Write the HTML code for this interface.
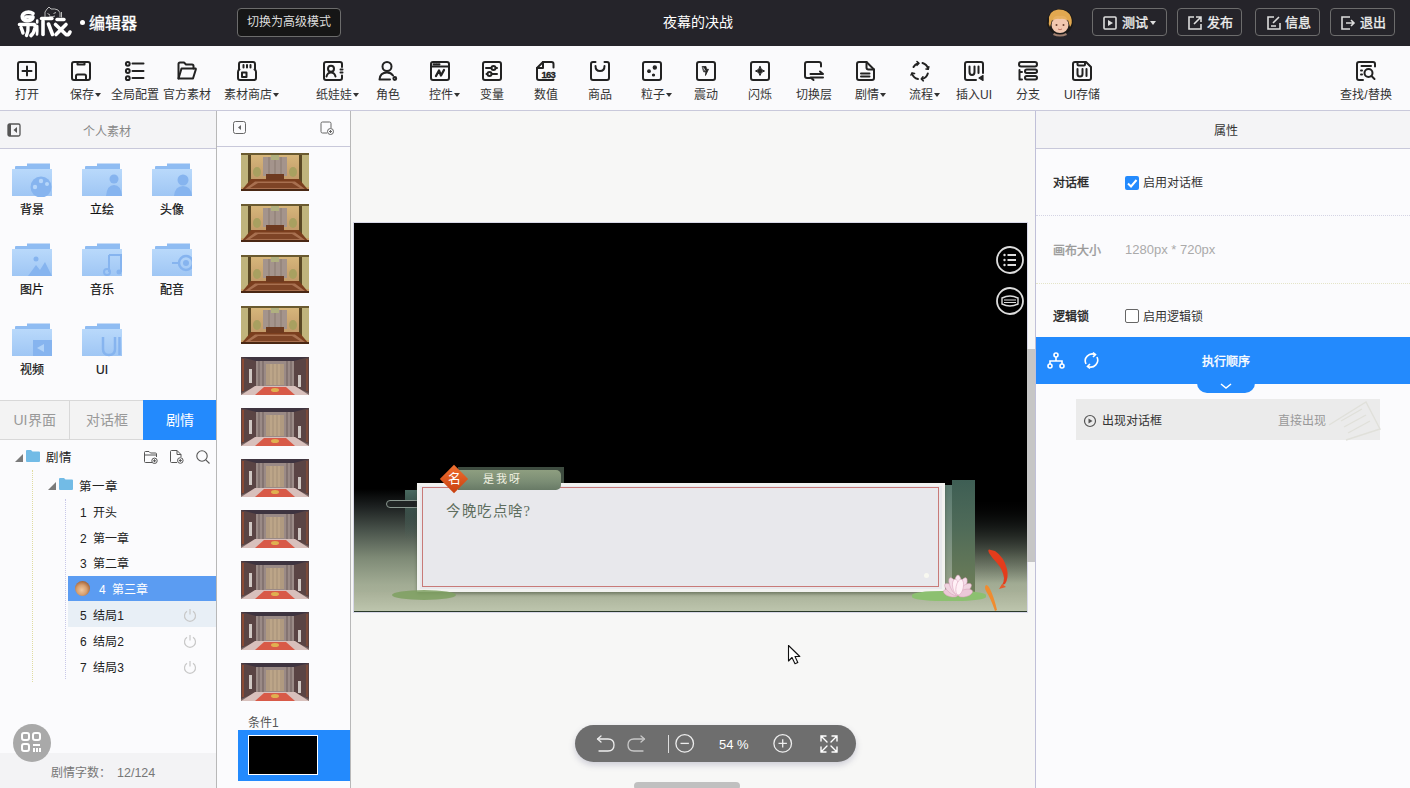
<!DOCTYPE html>
<html lang="zh-CN"><head><meta charset="utf-8">
<style>
*{box-sizing:border-box;margin:0;padding:0}
html,body{width:1410px;height:788px;overflow:hidden;background:#fbfbfd;font-family:"Liberation Sans",sans-serif;color:#333}
.a{position:absolute}
svg{position:absolute;overflow:visible}
#hdr{left:0;top:0;width:1410px;height:46px;background:#25242a}
.hb{position:absolute;top:8px;height:28px;border:1px solid #6c6c6c;border-radius:4px;color:#eee;font-size:13px;line-height:26px}
#tb{left:0;top:46px;width:1410px;height:65px;background:#fafafc;border-bottom:1px solid #c9c9db}
.tl{position:absolute;top:87px;font-size:12px;line-height:16px;color:#333;white-space:nowrap;text-align:center;width:80px}
.tri{display:inline-block;width:0;height:0;border-left:3px solid transparent;border-right:3px solid transparent;border-top:4px solid #333;vertical-align:middle;margin-left:1px;position:relative;top:-1px}
.ic{stroke:#222;stroke-width:2;fill:none;stroke-linecap:round;stroke-linejoin:round}
.fl{position:absolute;font-size:12px;line-height:14px;color:#111;text-align:center;width:70px;-webkit-text-stroke:0.2px #111}
.tree{position:absolute;font-size:12px;line-height:16px;color:#333;white-space:nowrap}
.th{position:absolute;left:241px;width:68px;height:38px}
.gold{background:
 linear-gradient(180deg,rgba(0,0,0,0) 0,rgba(0,0,0,0) 62%,#6b3a1c 66%,#8a4a24 80%,#5a2c14 100%),
 linear-gradient(90deg,#4a4020 0,#8a7a40 8%,#d8c080 22%,#e2cfa0 40%,#b8a890 50%,#e2cfa0 60%,#d8c080 78%,#8a7a40 92%,#4a4020 100%)}
.red{background:
 linear-gradient(180deg,rgba(0,0,0,0) 0,rgba(0,0,0,0) 60%,#a05040 66%,#d06050 80%,#c89080 100%),
 linear-gradient(90deg,#3a2420 0,#7a5a50 12%,#9a8070 30%,#b09a80 50%,#9a8070 70%,#7a5a50 88%,#3a2420 100%)}
</style></head><body>

<!-- HEADER -->
<div id="hdr" class="a"></div>
<svg style="left:0;top:0" width="76" height="46"><g fill="none" stroke="#fff" stroke-linecap="round" stroke-linejoin="round">
<path d="M33 13.5 Q30 11.5 26 12.5 Q21.5 14 22.5 18 Q24 21.5 29 20.5 Q33 19.5 33 17 H26" stroke-width="3.6"/>
<path d="M19.5 24.5 H34 Q35.5 25 35 28 Q34 33 31 35.5" stroke-width="3.6"/>
<path d="M21 27.5 Q22.5 31 23 33" stroke-width="3.4"/>
<path d="M28 26.5 Q28.5 31 26.5 35.5" stroke-width="3.4"/>
<path d="M37.2 20.5 V22.5 M37.2 26 Q37.5 31 37 34.5" stroke-width="2.6"/>
<path d="M41.5 18.5 H52" stroke-width="3.4"/>
<path d="M43 21 V34.5" stroke-width="3.6"/>
<path d="M48.5 24 L52.5 34.5" stroke-width="3.6"/>
<path d="M57 19.5 H64" stroke-width="3.4"/>
<path d="M55.5 24.5 L66 34.5 Q68.5 35.5 70 32" stroke-width="3.6"/>
<path d="M66 24.5 L56 34.5" stroke-width="3.6"/>
</g><g fill="none" stroke="#bbb" stroke-width="1"><path d="M45 17 Q44 11 47 9 L49 7 L51 9 Q55 8.5 58 10 Q61 12 60 17"/><path d="M47.5 13.5 L50 15 M53.5 13.5 L56 12.5 M49 16 Q52 17.5 55 16"/><path d="M61.5 12 V17.5"/></g></svg>
<div class="a" style="left:80px;top:20px;width:5px;height:5px;border-radius:50%;background:#fff"></div>
<div class="a" style="left:89px;top:14px;color:#fff;font-size:16px;line-height:20px;-webkit-text-stroke:0.35px currentColor">编辑器</div>
<div class="hb" style="left:237px;width:104px;top:8px;height:29px;text-align:center;font-size:12px;line-height:27px;color:#ddd;background:#161616">切换为高级模式</div>
<div class="a" style="left:598px;width:200px;top:13px;text-align:center;color:#fff;font-size:14px;line-height:18px">夜幕的决战</div>
<svg style="left:1046px;top:7px" width="28" height="30"><circle cx="14" cy="15" r="13" fill="#1c1a18"/><path d="M3 14 Q2 4 12 2.5 Q22 2 25 10 Q27 16 24 20 L22 13 Q14 10 6 13 L4 20 Q2 17 3 14Z" fill="#e2a850"/><ellipse cx="14" cy="18" rx="8.5" ry="8" fill="#f2c8b0"/><path d="M5.5 14 Q8 8 14 9 Q20 8 22.5 14 Q18 11 14 12 Q10 11 5.5 14Z" fill="#e8b060"/><circle cx="10.5" cy="18" r="1" fill="#6a4030"/><circle cx="17.5" cy="18" r="1" fill="#6a4030"/><path d="M12 22 Q14 23.5 16 22" stroke="#b06050" stroke-width=".8" fill="none"/><path d="M8 26 Q14 29 20 26 L21 28 Q14 31 7 28Z" fill="#a08070"/></svg>
<div class="hb" style="left:1092px;width:75px"><svg style="left:10px;top:7px" width="14" height="14"><rect x="1" y="1" width="12" height="12" rx="1" fill="none" stroke="#ddd" stroke-width="1.6"/><path d="M5 4 L10 7 L5 10 Z" fill="#ddd"/></svg><span class="a" style="left:29px;top:1px;-webkit-text-stroke:0.35px currentColor">测试</span><span class="a" style="left:57px;top:12px;border-left:3px solid transparent;border-right:3px solid transparent;border-top:4px solid #ddd"></span></div>
<div class="hb" style="left:1177px;width:65px"><svg style="left:10px;top:7px" width="14" height="14"><path d="M6 1 H1 V13 H13 V8 M8 1 H13 V6 M13 1 L6 8" fill="none" stroke="#ddd" stroke-width="1.6"/></svg><span class="a" style="left:29px;top:1px;-webkit-text-stroke:0.35px currentColor">发布</span></div>
<div class="hb" style="left:1255px;width:65px"><svg style="left:11px;top:7px" width="14" height="14"><path d="M7 1 H1 V13 H13 V7 M12 1 L6 7 M4 10 H9" fill="none" stroke="#ddd" stroke-width="1.6"/></svg><span class="a" style="left:29px;top:1px;-webkit-text-stroke:0.35px currentColor">信息</span></div>
<div class="hb" style="left:1330px;width:65px"><svg style="left:10px;top:7px" width="14" height="14"><path d="M9 1 H1 V13 H9 M5 7 H13 M10 4 L13 7 L10 10" fill="none" stroke="#ddd" stroke-width="1.6"/></svg><span class="a" style="left:29px;top:1px;-webkit-text-stroke:0.35px currentColor">退出</span></div>

<!-- TOOLBAR -->
<div id="tb" class="a"></div>
<div id="tools"><svg style="left:17px;top:61px" width="20" height="20"><g class="ic"><rect x="1" y="1" width="18" height="18" rx="2"/><path d="M10 5.5V14.5M5.5 10H14.5"/></g></svg>
<div class="tl" style="left:-13px">打开</div>
<svg style="left:71px;top:61px" width="20" height="20"><g class="ic"><rect x="1" y="1" width="18" height="18" rx="2"/><path d="M6.5 1V3.5H13.5V1M5 19V15Q5 13.5 6.5 13.5H13.5Q15 13.5 15 15V19"/></g></svg>
<div class="tl" style="left:45px">保存<span class="tri"></span></div>
<svg style="left:125px;top:61px" width="20" height="20"><g class="ic"><circle cx="2.8" cy="2.8" r="1.9"/><circle cx="2.8" cy="10" r="1.9"/><circle cx="2.8" cy="17.2" r="1.9"/><path d="M7.5 2.5H18.5M7.5 10H18.5M7.5 17H18.5"/></g></svg>
<div class="tl" style="left:95px">全局配置</div>
<svg style="left:177px;top:61px" width="20" height="20"><g class="ic"><path d="M1.5 17.5V3Q1.5 1.5 3 1.5H7L9 3.5H15Q16.5 3.5 16.5 5V7.5"/><path d="M1.5 17.5L4.5 7.5H18.5Q19 7.5 18.8 8.5L16 17.5Z"/></g></svg>
<div class="tl" style="left:147px">官方素材</div>
<svg style="left:237px;top:61px" width="20" height="20"><g class="ic"><path d="M2 8V3Q2 1 4 1H16Q18 1 18 3V8"/><path d="M6.5 4V6.5M10 4V6.5M13.5 4V6.5"/><path d="M2.5 8.5Q1 9 1 11V17Q1 19 3 19H17Q19 19 19 17V11Q19 9 17.5 8.5"/><rect x="5" y="11.5" width="4.5" height="4.5"/></g></svg>
<div class="tl" style="left:211px">素材商店<span class="tri"></span></div>
<svg style="left:323px;top:61px" width="20" height="20"><g class="ic"><path d="M19 6V3Q19 1 17 1H3Q1 1 1 3V17Q1 19 3 19H17Q19 19 19 17V14.5"/><path d="M17.5 8.5H19.5M17.5 11.5H19.5"/><circle cx="8" cy="7.8" r="3"/><path d="M3.5 15.5Q4.5 11.5 8 11.5Q11.5 11.5 12.5 15.5"/></g></svg>
<div class="tl" style="left:297px">纸娃娃<span class="tri"></span></div>
<svg style="left:378px;top:61px" width="20" height="20"><g class="ic"><circle cx="9" cy="5.5" r="4.5"/><path d="M1.5 18.5Q2 11.5 9 11.5Q13 11.5 15 14.5M1.5 18.5H12"/><circle cx="16.8" cy="17.5" r="1.4"/></g></svg>
<div class="tl" style="left:348px">角色</div>
<svg style="left:430px;top:61px" width="20" height="20"><g class="ic"><rect x="1" y="1" width="18" height="18" rx="2"/><path d="M1 5.5H19M3.5 3.2H4.5M6 3.2H7M8.5 3.2H9.5"/><path d="M6 15L9 9.5L11 14.5L14 9" stroke-width="2.3"/></g></svg>
<div class="tl" style="left:404px">控件<span class="tri"></span></div>
<svg style="left:482px;top:61px" width="20" height="20"><g class="ic"><rect x="1" y="1" width="18" height="18" rx="2"/><path d="M4 7H15M4.5 13H15"/><circle cx="11.5" cy="7" r="2" fill="#fafafc"/><circle cx="7.5" cy="13" r="2" fill="#fafafc"/></g></svg>
<div class="tl" style="left:452px">变量</div>
<svg style="left:536px;top:61px" width="20" height="20"><g class="ic"><path d="M17.5 6.5V3Q17.5 1 15.5 1H7L1 7V17Q1 19 3 19H17Q17.5 19 17.5 18.5"/><path d="M1 7H7V1"/><text x="5.5" y="16.8" font-size="9.5" font-weight="bold" font-family="Liberation Sans" fill="#222" stroke="#222" stroke-width="0.3" letter-spacing="-0.8">163</text></g></svg>
<div class="tl" style="left:506px">数值</div>
<svg style="left:590px;top:61px" width="20" height="20"><g class="ic"><path d="M5.5 1H3Q1 1 1 3V17Q1 19 3 19H17Q19 19 19 17V3Q19 1 17 1H14.5"/><path d="M5.5 5Q5.5 10 10 10Q14.5 10 14.5 5"/></g></svg>
<div class="tl" style="left:560px">商品</div>
<svg style="left:642px;top:61px" width="20" height="20"><g class="ic"><rect x="1" y="1" width="18" height="18" rx="2"/><circle cx="7" cy="10.2" r="1.3" fill="#222" stroke-width="1.2"/><circle cx="12.8" cy="6.5" r="1.6" fill="#222" stroke-width="1.2"/><circle cx="11.5" cy="14" r="1" fill="#222" stroke-width="1.2"/></g></svg>
<div class="tl" style="left:616px">粒子<span class="tri"></span></div>
<svg style="left:696px;top:61px" width="20" height="20"><g class="ic"><rect x="1" y="1" width="18" height="18" rx="2"/><path d="M6.5 5.5H10L10.5 8.3L12.5 8.3L9.5 14.5L9.8 10.8L8 10.8Z" fill="#222" stroke-width="0.8"/><path d="M7.5 6.8 L9 9.5" stroke="#fafafc" stroke-width="0.8"/></g></svg>
<div class="tl" style="left:666px">震动</div>
<svg style="left:750px;top:61px" width="20" height="20"><g class="ic"><rect x="1" y="1" width="18" height="18" rx="2"/><path d="M10 5.5Q10.6 9.2 14.5 10Q10.6 10.8 10 14.5Q9.4 10.8 5.5 10Q9.4 9.2 10 5.5Z" fill="#222" stroke-width="1"/></g></svg>
<div class="tl" style="left:720px">闪烁</div>
<svg style="left:804px;top:61px" width="20" height="20"><g class="ic"><path d="M6 17H3Q1 17 1 15V3Q1 1 3 1H15Q17 1 17 3V5.5"/><path d="M6.5 13H19L16 10.5M19 16.5H6.5L9.5 19"/></g></svg>
<div class="tl" style="left:774px">切换层</div>
<svg style="left:856px;top:61px" width="20" height="20"><g class="ic"><path d="M1 3Q1 1 3 1H10.5L18 8.5V17Q18 19 16 19H3Q1 19 1 17Z"/><path d="M10.5 1V6.5Q10.5 8.5 12.5 8.5H18"/><path d="M5 12.5H13.5M5 15.5H13.5"/></g></svg>
<div class="tl" style="left:830px">剧情<span class="tri"></span></div>
<svg style="left:910px;top:61px" width="20" height="20"><g class="ic"><path d="M3.5 6 A8 8 0 0 1 8 2.2" /><path d="M12.5 2 A8 8 0 0 1 18 7.5"/><path d="M17.8 12.5 A8 8 0 0 1 12 18"/><path d="M8 18 A8 8 0 0 1 2 12.5"/><path d="M7 0.5 L9 2.3 L7 4.3" stroke-width="1.6"/><path d="M16 8 L18.2 8.2 L18.8 5.8" stroke-width="1.6"/><path d="M13 15.8 L11.3 18 L13.3 19.8" stroke-width="1.6"/><path d="M1 14 L2 12 L4.5 12.5" stroke-width="1.6"/></g></svg>
<div class="tl" style="left:884px">流程<span class="tri"></span></div>
<svg style="left:964px;top:61px" width="20" height="20"><g class="ic"><path d="M12 19H3Q1 19 1 17V3Q1 1 3 1H17Q19 1 19 3V12"/><path d="M5.5 5.5V11Q5.5 14 8 14Q10.5 14 10.5 11V5.5M14.5 5.5V12"/><path d="M19 14.5V19.5L15 17Z" fill="#222" stroke-width="1.2"/></g></svg>
<div class="tl" style="left:934px">插入UI</div>
<svg style="left:1018px;top:61px" width="20" height="20"><g class="ic"><rect x="1" y="1" width="18" height="4.5" rx="2.2"/><rect x="7" y="8.5" width="12" height="3.5" rx="1.7"/><rect x="7" y="15" width="12" height="3.5" rx="1.7"/><path d="M1.5 9V18.5H4M1.5 11H4"/></g></svg>
<div class="tl" style="left:988px">分支</div>
<svg style="left:1072px;top:61px" width="20" height="20"><g class="ic"><path d="M1 3Q1 1 3 1H14L19 6V17Q19 19 17 19H3Q1 19 1 17Z"/><path d="M5.5 1V3.5Q5.5 4.5 6.5 4.5H12Q13 4.5 13 3.5V1"/><path d="M5.5 8V13Q5.5 15.5 8 15.5Q10.5 15.5 10.5 13V8M14.5 8V15"/></g></svg>
<div class="tl" style="left:1042px">UI存储</div>
<svg style="left:1356px;top:61px" width="20" height="20"><g class="ic"><path d="M7 19H3Q1 19 1 17V3Q1 1 3 1H17Q19 1 19 3V5.5"/><path d="M5.5 5H15M5 9.5H6M5 13.5H6"/><circle cx="12.5" cy="12" r="4"/><path d="M15.5 15L18.5 18"/></g></svg>
<div class="tl" style="left:1326px">查找/替换</div></div><!--/tools-->

<!-- LEFT PANEL -->
<div class="a" style="left:0;top:111px;width:216px;height:38px;background:#f4f4f6;border-bottom:1px solid #c8c8da"></div>
<svg style="left:7px;top:123px" width="14" height="14"><rect x="1" y="1" width="12" height="12" rx="1.5" fill="none" stroke="#555" stroke-width="1.3"/><rect x="1" y="1" width="3" height="12" fill="#555"/><path d="M10 4 L6.5 7 L10 10Z" fill="#555"/></svg>
<div class="a" style="left:-1px;width:216px;top:124px;text-align:center;font-size:12px;line-height:16px;color:#888">个人素材</div>
<div class="a" style="left:216px;top:111px;width:1px;height:677px;background:#b8b8b8"></div>

<div id="folders"><svg style="left:12px;top:163px" width="40" height="34"><defs><linearGradient id="fg12163" x1="0" y1="0" x2="0" y2="1"><stop offset="0" stop-color="#b9d9fb"/><stop offset="1" stop-color="#9fc6f4"/></linearGradient><clipPath id="fc12163"><rect x="0" y="6" width="40" height="28"/></clipPath></defs><path d="M3 6 V4 Q3 3 4 3 H15 V0.5 H38 V6Z" fill="#8fbcf2"/><rect x="0" y="6" width="40" height="27" fill="url(#fg12163)"/><g clip-path="url(#fc12163)"><circle cx="29" cy="24" r="10.5" fill="#86b4ef"/><circle cx="29" cy="18" r="2.2" fill="#b6d6fa"/><circle cx="23" cy="24" r="2.2" fill="#b6d6fa"/><circle cx="35" cy="21" r="2" fill="#b6d6fa"/></g></svg>
<div class="fl" style="left:-3px;top:203px">背景</div>
<svg style="left:82px;top:163px" width="40" height="34"><defs><linearGradient id="fg82163" x1="0" y1="0" x2="0" y2="1"><stop offset="0" stop-color="#b9d9fb"/><stop offset="1" stop-color="#9fc6f4"/></linearGradient><clipPath id="fc82163"><rect x="0" y="6" width="40" height="28"/></clipPath></defs><path d="M3 6 V4 Q3 3 4 3 H15 V0.5 H38 V6Z" fill="#8fbcf2"/><rect x="0" y="6" width="40" height="27" fill="url(#fg82163)"/><g clip-path="url(#fc82163)"><circle cx="32" cy="16" r="4.5" fill="#86b4ef"/><path d="M24 33 Q25 22 32 22 Q39 22 40 33Z" fill="#86b4ef"/></g></svg>
<div class="fl" style="left:67px;top:203px">立绘</div>
<svg style="left:152px;top:163px" width="40" height="34"><defs><linearGradient id="fg152163" x1="0" y1="0" x2="0" y2="1"><stop offset="0" stop-color="#b9d9fb"/><stop offset="1" stop-color="#9fc6f4"/></linearGradient><clipPath id="fc152163"><rect x="0" y="6" width="40" height="28"/></clipPath></defs><path d="M3 6 V4 Q3 3 4 3 H15 V0.5 H38 V6Z" fill="#8fbcf2"/><rect x="0" y="6" width="40" height="27" fill="url(#fg152163)"/><g clip-path="url(#fc152163)"><circle cx="31" cy="17" r="5.5" fill="#86b4ef"/><path d="M22 33 Q23 23 31 23 Q39 23 40 33Z" fill="#86b4ef"/></g></svg>
<div class="fl" style="left:137px;top:203px">头像</div>
<svg style="left:12px;top:243px" width="40" height="34"><defs><linearGradient id="fg12243" x1="0" y1="0" x2="0" y2="1"><stop offset="0" stop-color="#b9d9fb"/><stop offset="1" stop-color="#9fc6f4"/></linearGradient><clipPath id="fc12243"><rect x="0" y="6" width="40" height="28"/></clipPath></defs><path d="M3 6 V4 Q3 3 4 3 H15 V0.5 H38 V6Z" fill="#8fbcf2"/><rect x="0" y="6" width="40" height="27" fill="url(#fg12243)"/><g clip-path="url(#fc12243)"><circle cx="24" cy="16" r="2.5" fill="#86b4ef"/><path d="M16 33 L24 22 L28 27 L33 19 L40 33Z" fill="#86b4ef"/></g></svg>
<div class="fl" style="left:-3px;top:283px">图片</div>
<svg style="left:82px;top:243px" width="40" height="34"><defs><linearGradient id="fg82243" x1="0" y1="0" x2="0" y2="1"><stop offset="0" stop-color="#b9d9fb"/><stop offset="1" stop-color="#9fc6f4"/></linearGradient><clipPath id="fc82243"><rect x="0" y="6" width="40" height="28"/></clipPath></defs><path d="M3 6 V4 Q3 3 4 3 H15 V0.5 H38 V6Z" fill="#8fbcf2"/><rect x="0" y="6" width="40" height="27" fill="url(#fg82243)"/><g clip-path="url(#fc82243)"><path d="M27 12 H39 V29 M27 12 V29" fill="none" stroke="#86b4ef" stroke-width="2"/><circle cx="25" cy="29" r="3" fill="none" stroke="#86b4ef" stroke-width="2"/><circle cx="37" cy="29" r="2.5" fill="#86b4ef"/></g></svg>
<div class="fl" style="left:67px;top:283px">音乐</div>
<svg style="left:152px;top:243px" width="40" height="34"><defs><linearGradient id="fg152243" x1="0" y1="0" x2="0" y2="1"><stop offset="0" stop-color="#b9d9fb"/><stop offset="1" stop-color="#9fc6f4"/></linearGradient><clipPath id="fc152243"><rect x="0" y="6" width="40" height="28"/></clipPath></defs><path d="M3 6 V4 Q3 3 4 3 H15 V0.5 H38 V6Z" fill="#8fbcf2"/><rect x="0" y="6" width="40" height="27" fill="url(#fg152243)"/><g clip-path="url(#fc152243)"><circle cx="34" cy="20" r="7" fill="none" stroke="#86b4ef" stroke-width="2.5"/><circle cx="34" cy="20" r="3" fill="#86b4ef"/><path d="M20 20 H27" stroke="#86b4ef" stroke-width="2"/></g></svg>
<div class="fl" style="left:137px;top:283px">配音</div>
<svg style="left:12px;top:323px" width="40" height="34"><defs><linearGradient id="fg12323" x1="0" y1="0" x2="0" y2="1"><stop offset="0" stop-color="#b9d9fb"/><stop offset="1" stop-color="#9fc6f4"/></linearGradient><clipPath id="fc12323"><rect x="0" y="6" width="40" height="28"/></clipPath></defs><path d="M3 6 V4 Q3 3 4 3 H15 V0.5 H38 V6Z" fill="#8fbcf2"/><rect x="0" y="6" width="40" height="27" fill="url(#fg12323)"/><g clip-path="url(#fc12323)"><rect x="21" y="17" width="19" height="16" fill="#86b4ef"/><path d="M32 21 L25 25 L32 29Z" fill="#b0d2f8"/></g></svg>
<div class="fl" style="left:-3px;top:363px">视频</div>
<svg style="left:82px;top:323px" width="40" height="34"><defs><linearGradient id="fg82323" x1="0" y1="0" x2="0" y2="1"><stop offset="0" stop-color="#b9d9fb"/><stop offset="1" stop-color="#9fc6f4"/></linearGradient><clipPath id="fc82323"><rect x="0" y="6" width="40" height="28"/></clipPath></defs><path d="M3 6 V4 Q3 3 4 3 H15 V0.5 H38 V6Z" fill="#8fbcf2"/><rect x="0" y="6" width="40" height="27" fill="url(#fg82323)"/><g clip-path="url(#fc82323)"><path d="M21 14 V26 Q21 32 27 32 Q33 32 33 26 V14 M37.5 14 V32" fill="none" stroke="#86b4ef" stroke-width="2.5"/></g></svg>
<div class="fl" style="left:67px;top:363px">UI</div></div><!--/folders-->

<div class="a" style="left:0;top:400px;width:216px;height:40px;background:#f3f3f3;border-top:1px solid #d8d8d8;border-bottom:1px solid #d8d8d8"></div>
<div class="a" style="left:69px;top:400px;width:1px;height:40px;background:#d8d8d8"></div>
<div class="a" style="left:143px;top:400px;width:73px;height:40px;background:#238afd"></div>
<div class="a" style="left:0;width:69px;top:411px;text-align:center;font-size:14px;line-height:18px;color:#999">UI界面</div>
<div class="a" style="left:70px;width:73px;top:411px;text-align:center;font-size:14px;line-height:18px;color:#999">对话框</div>
<div class="a" style="left:143px;width:73px;top:411px;text-align:center;font-size:14px;line-height:18px;color:#fff">剧情</div>

<div id="tree"><div class="a" style="left:32px;top:470px;width:1px;height:212px;border-left:1px dotted #e0dca0"></div>
<div class="a" style="left:65px;top:499px;width:1px;height:180px;border-left:1px dotted #c8c8e8"></div>
<svg style="left:15px;top:454px" width="8" height="8"><path d="M8 0 V8 H0Z" fill="#7a7a7a"/></svg>
<svg style="left:26px;top:450px" width="14" height="12"><path d="M0 1 Q0 0 1 0 H5 L6.5 1.5 H13 Q14 1.5 14 2.5 V11 Q14 12 13 12 H1 Q0 12 0 11Z" fill="#72bbe6"/></svg>
<div class="tree" style="left:46px;top:450px;font-size:12.5px;color:#222">剧情</div>
<svg style="left:144px;top:451px" width="14" height="13"><g fill="none" stroke="#555" stroke-width="1"><path d="M8 11.5 H1.5 Q0.5 11.5 0.5 10.5 V1.5 Q0.5 0.5 1.5 0.5 H5 L6.5 2 H11.5 Q12.5 2 12.5 3 V6"/><path d="M0.5 4 H12.5"/><circle cx="10.5" cy="9.8" r="2.7" fill="#fbfbfd"/><path d="M9 9.8 H12 M10.5 8.3 V11.3"/></g></svg>
<svg style="left:170px;top:450px" width="14" height="14"><g fill="none" stroke="#555" stroke-width="1"><path d="M7 12.5 H1.5 Q0.5 12.5 0.5 11.5 V1.5 Q0.5 0.5 1.5 0.5 H7 L11 4.5 V7"/><path d="M7 0.5 V4.5 H11"/><circle cx="10.3" cy="10.5" r="2.8" fill="#fbfbfd"/><path d="M8.8 10.5 H11.8 M10.3 9 V12"/></g></svg>
<svg style="left:196px;top:450px" width="14" height="14"><g fill="none" stroke="#555" stroke-width="1.1"><circle cx="6" cy="6" r="5.2"/><path d="M9.8 9.8 L13.5 13.5"/></g></svg>
<svg style="left:48px;top:482px" width="8" height="8"><path d="M8 0 V8 H0Z" fill="#7a7a7a"/></svg>
<svg style="left:59px;top:478px" width="14" height="12"><path d="M0 1 Q0 0 1 0 H5 L6.5 1.5 H13 Q14 1.5 14 2.5 V11 Q14 12 13 12 H1 Q0 12 0 11Z" fill="#72bbe6"/></svg>
<div class="tree" style="left:79px;top:479px;font-size:12.5px;color:#222">第一章</div>
<div class="a" style="left:68px;top:576px;width:148px;height:25px;background:#5b9cf2"></div>
<div class="a" style="left:68px;top:601px;width:148px;height:26px;background:#e8eff6"></div>
<div class="tree" style="left:80px;top:505px;color:#222;font-size:12px">1&nbsp; 开头</div>
<div class="tree" style="left:80px;top:531px;color:#222;font-size:12px">2&nbsp; 第一章</div>
<div class="tree" style="left:80px;top:556px;color:#222;font-size:12px">3&nbsp; 第二章</div>
<div class="a" style="left:75px;top:581px;width:15px;height:15px;border-radius:50%;background:radial-gradient(circle at 45% 60%,#f0c8a0 0,#d8a070 40%,#a86a40 70%,#6a4a3a 100%)"></div>
<div class="tree" style="left:99px;top:582px;color:#fff;font-size:12px">4&nbsp; 第三章</div>
<div class="tree" style="left:80px;top:608px;color:#222;font-size:12px">5&nbsp; 结局1</div>
<svg style="left:183px;top:608px" width="14" height="14"><g fill="none" stroke="#c8c8c8" stroke-width="1.2"><path d="M4 3.2 A5.5 5.5 0 1 0 10 3.2"/><path d="M7 1 V6.5"/></g></svg>
<div class="tree" style="left:80px;top:634px;color:#222;font-size:12px">6&nbsp; 结局2</div>
<svg style="left:183px;top:634px" width="14" height="14"><g fill="none" stroke="#c8c8c8" stroke-width="1.2"><path d="M4 3.2 A5.5 5.5 0 1 0 10 3.2"/><path d="M7 1 V6.5"/></g></svg>
<div class="tree" style="left:80px;top:660px;color:#222;font-size:12px">7&nbsp; 结局3</div>
<svg style="left:183px;top:660px" width="14" height="14"><g fill="none" stroke="#c8c8c8" stroke-width="1.2"><path d="M4 3.2 A5.5 5.5 0 1 0 10 3.2"/><path d="M7 1 V6.5"/></g></svg></div><!--/tree-->

<div class="a" style="left:0;top:753px;width:216px;height:35px;background:#f3f3f5"></div>
<div class="a" style="left:51px;top:765px;font-size:12px;line-height:16px;color:#777;white-space:nowrap">剧情字数：</div><div class="a" style="left:117px;top:765px;font-size:12.5px;line-height:16px;color:#777;white-space:nowrap">12/124</div>
<div class="a" style="left:13px;top:724px;width:38px;height:38px;border-radius:50%;background:#a9a9a9"></div>
<svg style="left:20px;top:731px" width="24" height="24"><g fill="none" stroke="#fff" stroke-width="2"><rect x="2" y="2" width="7" height="7" rx="2"/><rect x="13" y="2" width="7" height="7" rx="2"/><rect x="2" y="13" width="7" height="7" rx="2"/><path d="M13 14 H20 M14 17 V21 M17 17 V21 M20 17 V21"/></g></svg>

<!-- SECOND PANEL -->
<div class="a" style="left:217px;top:111px;width:133px;height:677px;background:#fbfbfd"></div>
<div class="a" style="left:217px;top:146px;width:133px;height:1px;background:#c8c8da"></div>
<svg style="left:233px;top:121px" width="13" height="13"><rect x="0.5" y="0.5" width="12" height="12" rx="2" fill="none" stroke="#666" stroke-width="1"/><path d="M8 4 L5 6.5 L8 9Z" fill="#666"/></svg>
<svg style="left:320px;top:121px" width="14" height="14"><path d="M7 12 H2.5 Q1 12 1 10.5 V2.5 Q1 1 2.5 1 H9.5 Q11 1 11 2.5 V7" fill="none" stroke="#666" stroke-width="1"/><circle cx="10.5" cy="10.5" r="3" fill="#fbfbfd" stroke="#666" stroke-width="1"/><path d="M9 10.5 H12 M10.5 9 V12" stroke="#666" stroke-width="1"/></svg>
<div id="thumbs"><svg style="left:0;top:0" width="0" height="0"><defs>
<linearGradient id="gw" x1="0" y1="0" x2="0" y2="1"><stop offset="0" stop-color="#d8b87c"/><stop offset="1" stop-color="#c09868"/></linearGradient>

</defs></svg>
<svg style="left:241px;top:153px" width="68" height="38" viewBox="0 0 68 38">
<rect width="68" height="38" fill="#c4a068"/>
<rect x="0" y="0" width="68" height="28" fill="url(#gw)"/>
<rect x="0" y="0" width="8" height="34" fill="#c0b47c"/>
<rect x="60" y="0" width="8" height="34" fill="#c0b47c"/>
<rect x="7" y="0" width="3" height="30" fill="#5a4824"/>
<rect x="58" y="0" width="3" height="30" fill="#5a4824"/>
<rect x="0" y="0" width="68" height="2" fill="#6a5a30"/>
<rect x="22" y="4" width="24" height="19" fill="#a4948c"/>
<path d="M28 4V23M34 4V23M40 4V23" stroke="#8a7a70" stroke-width="1"/>
<rect x="30" y="2" width="8" height="5" fill="#b0b080"/>
<ellipse cx="16" cy="19" rx="4" ry="5" fill="#a8a060"/>
<ellipse cx="52" cy="19" rx="4" ry="5" fill="#a8a060"/>
<path d="M0 38 L10 26 H58 L68 38Z" fill="#7a3e1e"/>
<path d="M4 36 L14 28.5 H54 L64 36Z" fill="#a87050"/>
<path d="M9 35 L17 30 H51 L59 35Z" fill="#7e4426"/>
<rect x="25" y="21" width="18" height="6" fill="#6e3a20"/>
<rect x="0" y="36" width="68" height="2" fill="#4a2814"/>
</svg>
<svg style="left:241px;top:204px" width="68" height="38" viewBox="0 0 68 38">
<rect width="68" height="38" fill="#c4a068"/>
<rect x="0" y="0" width="68" height="28" fill="url(#gw)"/>
<rect x="0" y="0" width="8" height="34" fill="#c0b47c"/>
<rect x="60" y="0" width="8" height="34" fill="#c0b47c"/>
<rect x="7" y="0" width="3" height="30" fill="#5a4824"/>
<rect x="58" y="0" width="3" height="30" fill="#5a4824"/>
<rect x="0" y="0" width="68" height="2" fill="#6a5a30"/>
<rect x="22" y="4" width="24" height="19" fill="#a4948c"/>
<path d="M28 4V23M34 4V23M40 4V23" stroke="#8a7a70" stroke-width="1"/>
<rect x="30" y="2" width="8" height="5" fill="#b0b080"/>
<ellipse cx="16" cy="19" rx="4" ry="5" fill="#a8a060"/>
<ellipse cx="52" cy="19" rx="4" ry="5" fill="#a8a060"/>
<path d="M0 38 L10 26 H58 L68 38Z" fill="#7a3e1e"/>
<path d="M4 36 L14 28.5 H54 L64 36Z" fill="#a87050"/>
<path d="M9 35 L17 30 H51 L59 35Z" fill="#7e4426"/>
<rect x="25" y="21" width="18" height="6" fill="#6e3a20"/>
<rect x="0" y="36" width="68" height="2" fill="#4a2814"/>
</svg>
<svg style="left:241px;top:255px" width="68" height="38" viewBox="0 0 68 38">
<rect width="68" height="38" fill="#c4a068"/>
<rect x="0" y="0" width="68" height="28" fill="url(#gw)"/>
<rect x="0" y="0" width="8" height="34" fill="#c0b47c"/>
<rect x="60" y="0" width="8" height="34" fill="#c0b47c"/>
<rect x="7" y="0" width="3" height="30" fill="#5a4824"/>
<rect x="58" y="0" width="3" height="30" fill="#5a4824"/>
<rect x="0" y="0" width="68" height="2" fill="#6a5a30"/>
<rect x="22" y="4" width="24" height="19" fill="#a4948c"/>
<path d="M28 4V23M34 4V23M40 4V23" stroke="#8a7a70" stroke-width="1"/>
<rect x="30" y="2" width="8" height="5" fill="#b0b080"/>
<ellipse cx="16" cy="19" rx="4" ry="5" fill="#a8a060"/>
<ellipse cx="52" cy="19" rx="4" ry="5" fill="#a8a060"/>
<path d="M0 38 L10 26 H58 L68 38Z" fill="#7a3e1e"/>
<path d="M4 36 L14 28.5 H54 L64 36Z" fill="#a87050"/>
<path d="M9 35 L17 30 H51 L59 35Z" fill="#7e4426"/>
<rect x="25" y="21" width="18" height="6" fill="#6e3a20"/>
<rect x="0" y="36" width="68" height="2" fill="#4a2814"/>
</svg>
<svg style="left:241px;top:306px" width="68" height="38" viewBox="0 0 68 38">
<rect width="68" height="38" fill="#c4a068"/>
<rect x="0" y="0" width="68" height="28" fill="url(#gw)"/>
<rect x="0" y="0" width="8" height="34" fill="#c0b47c"/>
<rect x="60" y="0" width="8" height="34" fill="#c0b47c"/>
<rect x="7" y="0" width="3" height="30" fill="#5a4824"/>
<rect x="58" y="0" width="3" height="30" fill="#5a4824"/>
<rect x="0" y="0" width="68" height="2" fill="#6a5a30"/>
<rect x="22" y="4" width="24" height="19" fill="#a4948c"/>
<path d="M28 4V23M34 4V23M40 4V23" stroke="#8a7a70" stroke-width="1"/>
<rect x="30" y="2" width="8" height="5" fill="#b0b080"/>
<ellipse cx="16" cy="19" rx="4" ry="5" fill="#a8a060"/>
<ellipse cx="52" cy="19" rx="4" ry="5" fill="#a8a060"/>
<path d="M0 38 L10 26 H58 L68 38Z" fill="#7a3e1e"/>
<path d="M4 36 L14 28.5 H54 L64 36Z" fill="#a87050"/>
<path d="M9 35 L17 30 H51 L59 35Z" fill="#7e4426"/>
<rect x="25" y="21" width="18" height="6" fill="#6e3a20"/>
<rect x="0" y="36" width="68" height="2" fill="#4a2814"/>
</svg>
<svg style="left:241px;top:357px" width="68" height="38" viewBox="0 0 68 38">
<rect width="68" height="38" fill="#7a6664"/>
<rect x="14" y="4" width="40" height="26" fill="#9a8a86"/>
<path d="M18 4V30M22 4V30M46 4V30M50 4V30" stroke="#6e5e5c" stroke-width="1"/>
<rect x="25" y="7" width="18" height="21" fill="#b09a80"/>
<path d="M30 7V28M34 7V28M38 7V28" stroke="#c8b090" stroke-width="1"/>
<rect x="0" y="0" width="68" height="4" fill="#3e3440"/>
<path d="M0 0 L15 4 V30 L0 36Z" fill="#5a4444"/>
<path d="M68 0 L53 4 V30 L68 36Z" fill="#5a4444"/>
<rect x="1" y="2" width="2" height="32" fill="#8a4a34"/>
<rect x="65" y="2" width="2" height="32" fill="#7a4a3a"/>
<rect x="8" y="12" width="3" height="14" fill="#d0c8c4"/>
<rect x="57" y="18" width="3" height="12" fill="#d0c8c4"/>
<path d="M0 38 L14 29 H54 L68 38Z" fill="#d8c0bc"/>
<path d="M14 38 L23 30 H45 L54 38Z" fill="#d85a48"/>
<ellipse cx="34" cy="33" rx="4" ry="2" fill="#e0b050"/>
</svg>
<svg style="left:241px;top:408px" width="68" height="38" viewBox="0 0 68 38">
<rect width="68" height="38" fill="#7a6664"/>
<rect x="14" y="4" width="40" height="26" fill="#9a8a86"/>
<path d="M18 4V30M22 4V30M46 4V30M50 4V30" stroke="#6e5e5c" stroke-width="1"/>
<rect x="25" y="7" width="18" height="21" fill="#b09a80"/>
<path d="M30 7V28M34 7V28M38 7V28" stroke="#c8b090" stroke-width="1"/>
<rect x="0" y="0" width="68" height="4" fill="#3e3440"/>
<path d="M0 0 L15 4 V30 L0 36Z" fill="#5a4444"/>
<path d="M68 0 L53 4 V30 L68 36Z" fill="#5a4444"/>
<rect x="1" y="2" width="2" height="32" fill="#8a4a34"/>
<rect x="65" y="2" width="2" height="32" fill="#7a4a3a"/>
<rect x="8" y="12" width="3" height="14" fill="#d0c8c4"/>
<rect x="57" y="18" width="3" height="12" fill="#d0c8c4"/>
<path d="M0 38 L14 29 H54 L68 38Z" fill="#d8c0bc"/>
<path d="M14 38 L23 30 H45 L54 38Z" fill="#d85a48"/>
<ellipse cx="34" cy="33" rx="4" ry="2" fill="#e0b050"/>
</svg>
<svg style="left:241px;top:459px" width="68" height="38" viewBox="0 0 68 38">
<rect width="68" height="38" fill="#7a6664"/>
<rect x="14" y="4" width="40" height="26" fill="#9a8a86"/>
<path d="M18 4V30M22 4V30M46 4V30M50 4V30" stroke="#6e5e5c" stroke-width="1"/>
<rect x="25" y="7" width="18" height="21" fill="#b09a80"/>
<path d="M30 7V28M34 7V28M38 7V28" stroke="#c8b090" stroke-width="1"/>
<rect x="0" y="0" width="68" height="4" fill="#3e3440"/>
<path d="M0 0 L15 4 V30 L0 36Z" fill="#5a4444"/>
<path d="M68 0 L53 4 V30 L68 36Z" fill="#5a4444"/>
<rect x="1" y="2" width="2" height="32" fill="#8a4a34"/>
<rect x="65" y="2" width="2" height="32" fill="#7a4a3a"/>
<rect x="8" y="12" width="3" height="14" fill="#d0c8c4"/>
<rect x="57" y="18" width="3" height="12" fill="#d0c8c4"/>
<path d="M0 38 L14 29 H54 L68 38Z" fill="#d8c0bc"/>
<path d="M14 38 L23 30 H45 L54 38Z" fill="#d85a48"/>
<ellipse cx="34" cy="33" rx="4" ry="2" fill="#e0b050"/>
</svg>
<svg style="left:241px;top:510px" width="68" height="38" viewBox="0 0 68 38">
<rect width="68" height="38" fill="#7a6664"/>
<rect x="14" y="4" width="40" height="26" fill="#9a8a86"/>
<path d="M18 4V30M22 4V30M46 4V30M50 4V30" stroke="#6e5e5c" stroke-width="1"/>
<rect x="25" y="7" width="18" height="21" fill="#b09a80"/>
<path d="M30 7V28M34 7V28M38 7V28" stroke="#c8b090" stroke-width="1"/>
<rect x="0" y="0" width="68" height="4" fill="#3e3440"/>
<path d="M0 0 L15 4 V30 L0 36Z" fill="#5a4444"/>
<path d="M68 0 L53 4 V30 L68 36Z" fill="#5a4444"/>
<rect x="1" y="2" width="2" height="32" fill="#8a4a34"/>
<rect x="65" y="2" width="2" height="32" fill="#7a4a3a"/>
<rect x="8" y="12" width="3" height="14" fill="#d0c8c4"/>
<rect x="57" y="18" width="3" height="12" fill="#d0c8c4"/>
<path d="M0 38 L14 29 H54 L68 38Z" fill="#d8c0bc"/>
<path d="M14 38 L23 30 H45 L54 38Z" fill="#d85a48"/>
<ellipse cx="34" cy="33" rx="4" ry="2" fill="#e0b050"/>
</svg>
<svg style="left:241px;top:561px" width="68" height="38" viewBox="0 0 68 38">
<rect width="68" height="38" fill="#7a6664"/>
<rect x="14" y="4" width="40" height="26" fill="#9a8a86"/>
<path d="M18 4V30M22 4V30M46 4V30M50 4V30" stroke="#6e5e5c" stroke-width="1"/>
<rect x="25" y="7" width="18" height="21" fill="#b09a80"/>
<path d="M30 7V28M34 7V28M38 7V28" stroke="#c8b090" stroke-width="1"/>
<rect x="0" y="0" width="68" height="4" fill="#3e3440"/>
<path d="M0 0 L15 4 V30 L0 36Z" fill="#5a4444"/>
<path d="M68 0 L53 4 V30 L68 36Z" fill="#5a4444"/>
<rect x="1" y="2" width="2" height="32" fill="#8a4a34"/>
<rect x="65" y="2" width="2" height="32" fill="#7a4a3a"/>
<rect x="8" y="12" width="3" height="14" fill="#d0c8c4"/>
<rect x="57" y="18" width="3" height="12" fill="#d0c8c4"/>
<path d="M0 38 L14 29 H54 L68 38Z" fill="#d8c0bc"/>
<path d="M14 38 L23 30 H45 L54 38Z" fill="#d85a48"/>
<ellipse cx="34" cy="33" rx="4" ry="2" fill="#e0b050"/>
</svg>
<svg style="left:241px;top:612px" width="68" height="38" viewBox="0 0 68 38">
<rect width="68" height="38" fill="#7a6664"/>
<rect x="14" y="4" width="40" height="26" fill="#9a8a86"/>
<path d="M18 4V30M22 4V30M46 4V30M50 4V30" stroke="#6e5e5c" stroke-width="1"/>
<rect x="25" y="7" width="18" height="21" fill="#b09a80"/>
<path d="M30 7V28M34 7V28M38 7V28" stroke="#c8b090" stroke-width="1"/>
<rect x="0" y="0" width="68" height="4" fill="#3e3440"/>
<path d="M0 0 L15 4 V30 L0 36Z" fill="#5a4444"/>
<path d="M68 0 L53 4 V30 L68 36Z" fill="#5a4444"/>
<rect x="1" y="2" width="2" height="32" fill="#8a4a34"/>
<rect x="65" y="2" width="2" height="32" fill="#7a4a3a"/>
<rect x="8" y="12" width="3" height="14" fill="#d0c8c4"/>
<rect x="57" y="18" width="3" height="12" fill="#d0c8c4"/>
<path d="M0 38 L14 29 H54 L68 38Z" fill="#d8c0bc"/>
<path d="M14 38 L23 30 H45 L54 38Z" fill="#d85a48"/>
<ellipse cx="34" cy="33" rx="4" ry="2" fill="#e0b050"/>
</svg>
<svg style="left:241px;top:663px" width="68" height="38" viewBox="0 0 68 38">
<rect width="68" height="38" fill="#7a6664"/>
<rect x="14" y="4" width="40" height="26" fill="#9a8a86"/>
<path d="M18 4V30M22 4V30M46 4V30M50 4V30" stroke="#6e5e5c" stroke-width="1"/>
<rect x="25" y="7" width="18" height="21" fill="#b09a80"/>
<path d="M30 7V28M34 7V28M38 7V28" stroke="#c8b090" stroke-width="1"/>
<rect x="0" y="0" width="68" height="4" fill="#3e3440"/>
<path d="M0 0 L15 4 V30 L0 36Z" fill="#5a4444"/>
<path d="M68 0 L53 4 V30 L68 36Z" fill="#5a4444"/>
<rect x="1" y="2" width="2" height="32" fill="#8a4a34"/>
<rect x="65" y="2" width="2" height="32" fill="#7a4a3a"/>
<rect x="8" y="12" width="3" height="14" fill="#d0c8c4"/>
<rect x="57" y="18" width="3" height="12" fill="#d0c8c4"/>
<path d="M0 38 L14 29 H54 L68 38Z" fill="#d8c0bc"/>
<path d="M14 38 L23 30 H45 L54 38Z" fill="#d85a48"/>
<ellipse cx="34" cy="33" rx="4" ry="2" fill="#e0b050"/>
</svg></div><!--/thumbs-->
<div class="a" style="left:248px;top:715px;font-size:12px;line-height:16px;color:#555">条件1</div>
<div class="a" style="left:238px;top:730px;width:112px;height:51px;background:#238afd"></div>
<div class="a" style="left:248px;top:735px;width:70px;height:40px;background:#000;border:1px solid #fff"></div>
<div class="a" style="left:350px;top:111px;width:1px;height:677px;background:#b8b8b8"></div>

<!-- CANVAS AREA -->
<div class="a" style="left:351px;top:111px;width:684px;height:677px;background:#f7f7f6"></div>
<div id="canvas" class="a" style="left:354px;top:223px;width:673px;height:389px;background:#000;overflow:hidden;box-shadow:0 0 0 1px #d8d8e8"><div class="a" style="left:0;top:266px;width:673px;height:123px;background:linear-gradient(180deg,rgba(0,0,0,0) 0,#1c2020 14%,#4a544c 34%,#7e8a76 56%,#a2ac94 78%,#b2baa2 100%)"></div>
<div class="a" style="left:621px;top:250px;width:52px;height:110px;background:linear-gradient(180deg,#000 0,#000 25%,rgba(0,0,0,0) 100%)"></div>
<div class="a" style="left:0;top:369px;width:673px;height:20px;background:linear-gradient(180deg,#a8b098,#bec6ae)"></div>
<div class="a" style="left:0;top:388px;width:673px;height:1px;background:#2a3a2a"></div>
<div class="a" style="left:51px;top:267px;width:14px;height:50px;background:linear-gradient(180deg,#4a6a60,rgba(58,74,64,0))"></div>
<div class="a" style="left:32px;top:277px;width:40px;height:8px;border-radius:4px;background:#202424;border:1px solid #8a9890"></div>
<div class="a" style="left:590px;top:262px;width:8px;height:107px;background:linear-gradient(180deg,#5a7a70 0,#7a9080 50%,#9aa48a 100%)"></div><div class="a" style="left:598px;top:257px;width:23px;height:112px;background:linear-gradient(180deg,#3e5e54 0,#4e6a58 40%,#6e7e58 100%)"></div>
<div class="a" style="left:63px;top:260px;width:528px;height:109px;background:#e8e8ec;border:3px solid #f2f2f0;box-shadow:0 2px 3px rgba(60,70,50,.5)"></div>
<div class="a" style="left:68px;top:264px;width:517px;height:100px;border:1px solid #c87a78"></div>
<div class="a" style="left:104px;top:244px;width:106px;height:16px;background:#3e4c40"></div><div class="a" style="left:104px;top:247px;width:103px;height:20px;border-radius:0 5px 5px 0;background:linear-gradient(180deg,#8e9e80 0,#7a8c74 60%,#687a66 100%)"></div>
<div class="a" style="left:90px;top:246px;width:20px;height:20px;transform:rotate(45deg);background:linear-gradient(135deg,#f07030,#c84010)"></div>
<div class="a" style="left:92px;top:247px;width:16px;font-family:'Liberation Serif',serif;font-size:13px;line-height:18px;color:#fff;text-align:center">名</div>
<div class="a" style="left:129px;top:248px;font-family:'Liberation Serif',serif;font-size:11px;line-height:16px;color:#f0f0e0;letter-spacing:2px">是我呀</div>
<div class="a" style="left:92px;top:279px;font-family:'Liberation Serif',serif;font-size:14.5px;line-height:18px;color:#5e6e5e;letter-spacing:1.5px">今晚吃点啥?</div>
<div class="a" style="left:38px;top:367px;width:64px;height:10px;border-radius:50%;background:#7ea060;opacity:.85"></div>
<div class="a" style="left:558px;top:368px;width:74px;height:10px;border-radius:40%;background:#8cc070"></div>
<svg style="left:584px;top:346px" width="40" height="30"><ellipse cx="20" cy="18.5" rx="3.6" ry="7.5" fill="#ecc8d8" stroke="#d8a0b8" stroke-width=".5" transform="rotate(-75 20 26)"/><ellipse cx="20" cy="17.5" rx="3.6" ry="8.5" fill="#f0d4e0" stroke="#d8a0b8" stroke-width=".5" transform="rotate(-50 20 26)"/><ellipse cx="20" cy="16.5" rx="3.6" ry="9.5" fill="#f4dce8" stroke="#d8a0b8" stroke-width=".5" transform="rotate(-25 20 26)"/><ellipse cx="20" cy="16.0" rx="3.6" ry="10.0" fill="#f8e4ee" stroke="#d8a0b8" stroke-width=".5" transform="rotate(0 20 26)"/><ellipse cx="20" cy="16.5" rx="3.6" ry="9.5" fill="#f4dce8" stroke="#d8a0b8" stroke-width=".5" transform="rotate(25 20 26)"/><ellipse cx="20" cy="17.5" rx="3.6" ry="8.5" fill="#f0d4e0" stroke="#d8a0b8" stroke-width=".5" transform="rotate(50 20 26)"/><ellipse cx="20" cy="18.5" rx="3.6" ry="7.5" fill="#ecc8d8" stroke="#d8a0b8" stroke-width=".5" transform="rotate(75 20 26)"/><ellipse cx="20" cy="18.0" rx="3.6" ry="8.0" fill="#fff0f6" stroke="#d8a0b8" stroke-width=".5" transform="rotate(-12 20 26)"/><ellipse cx="20" cy="18.0" rx="3.6" ry="8.0" fill="#fff0f6" stroke="#d8a0b8" stroke-width=".5" transform="rotate(12 20 26)"/></svg>
<svg style="left:628px;top:324px" width="34" height="66"><path d="M9 3 Q5 1 7 6 Q10 11 15 16 Q21 23 22 31 Q22 35 20 38 L23 37 Q27 31 25 22 Q22 10 13 4 Z" fill="#e43c1c"/><path d="M20 37 L17 42 L24 40Z" fill="#e85a2a"/><path d="M4 38 Q2 40 4 44 Q9 52 13 64 L15 63 Q12 50 8 42 Q6 38 4 38Z" fill="#f08c30"/></svg>
<div class="a" style="left:570px;top:350px;width:5px;height:5px;border-radius:50%;background:#f8f8f0"></div>
<svg style="left:642px;top:23px" width="28" height="28"><circle cx="14" cy="14" r="13" fill="none" stroke="#ddd" stroke-width="1.8"/><g fill="#ddd"><circle cx="8.5" cy="9" r="1.2"/><circle cx="8.5" cy="14" r="1.2"/><circle cx="8.5" cy="19" r="1.2"/></g><path d="M11.5 9 H20 M11.5 14 H20 M11.5 19 H20" stroke="#ddd" stroke-width="1.8"/></svg>
<svg style="left:642px;top:64px" width="28" height="28"><circle cx="14" cy="14" r="13" fill="none" stroke="#ddd" stroke-width="1.8"/><path d="M6 11 Q14 7 22 11 V17 Q14 21 6 17Z" fill="none" stroke="#ddd" stroke-width="1.4"/><path d="M8 13 H20 M8 15.5 H20" stroke="#ddd" stroke-width="1"/></svg></div><!--/canvas-->
<div class="a" style="left:1027px;top:349px;width:8px;height:213px;background:#c6c6c6"></div>
<div class="a" style="left:634px;top:782px;width:106px;height:8px;border-radius:5px;background:#c0c0c0"></div>
<div id="zoom" class="a" style="left:575px;top:725px;width:281px;height:37px;border-radius:19px;background:#6e6e6e;box-shadow:0 3px 6px rgba(80,80,120,.25)"></div>
<svg style="left:596px;top:735px" width="20" height="18"><g fill="none" stroke="#eee" stroke-width="1.3" stroke-linecap="round" stroke-linejoin="round"><path d="M2 4 H12 Q18 4 18 10 Q18 16 12 16 H3"/><path d="M5 1 L1.5 4 L5 7"/></g></svg>
<svg style="left:626px;top:735px" width="20" height="18"><g fill="none" stroke="#c8c8c8" stroke-width="1.3" stroke-linecap="round" stroke-linejoin="round"><path d="M18 4 H8 Q2 4 2 10 Q2 16 8 16 H17"/><path d="M15 1 L18.5 4 L15 7"/></g></svg>
<div class="a" style="left:668px;top:735px;width:1px;height:18px;background:#ddd"></div>
<svg style="left:675px;top:734px" width="20" height="20"><g fill="none" stroke="#eee" stroke-width="1.3"><circle cx="9.7" cy="9.4" r="8.8"/><path d="M5.5 9.4 H13.9"/></g></svg>
<div class="a" style="left:719px;top:736px;font-size:13px;line-height:17px;color:#fff">54 %</div>
<svg style="left:773px;top:734px" width="20" height="20"><g fill="none" stroke="#eee" stroke-width="1.3"><circle cx="9.7" cy="9.4" r="8.8"/><path d="M5.5 9.4 H13.9 M9.7 5.2 V13.6"/></g></svg>
<svg style="left:820px;top:735px" width="18" height="18"><g fill="none" stroke="#fff" stroke-width="1.4" stroke-linecap="round"><path d="M1 6 V1 H6 M1 1 L7 7"/><path d="M17 6 V1 H12 M17 1 L11 7"/><path d="M1 12 V17 H6 M1 17 L7 11"/><path d="M17 12 V17 H12 M17 17 L11 11"/></g></svg>
<svg style="left:788px;top:645px" width="14" height="20"><path d="M0.5 0.5 V16 L4 12.5 L7 18.8 L9.8 17.6 L7 11.5 H11.8 Z" fill="#fff" stroke="#111" stroke-width="1.1" stroke-linejoin="round"/></svg>

<!-- RIGHT PANEL -->
<div class="a" style="left:1035px;top:111px;width:375px;height:677px;background:#fbfbfd;border-left:1px solid #c0c0d8"></div>
<div class="a" style="left:1036px;top:111px;width:374px;height:38px;background:#f4f4f6;border-bottom:1px solid #c8c8da"></div>
<div class="a" style="left:1039px;width:374px;top:123px;text-align:center;font-size:12px;line-height:16px;color:#333">属性</div>
<div class="a" style="left:1053px;top:175px;font-size:12px;line-height:16px;color:#222;-webkit-text-stroke:0.35px currentColor">对话框</div>
<div class="a" style="left:1125px;top:176px;width:14px;height:14px;border-radius:2px;background:#238afd"></div>
<svg style="left:1125px;top:176px" width="14" height="14"><path d="M3 7.5 L6 10.5 L11.5 4" fill="none" stroke="#fff" stroke-width="2"/></svg>
<div class="a" style="left:1143px;top:175px;font-size:12px;line-height:16px;color:#333">启用对话框</div>
<div class="a" style="left:1036px;top:215px;width:374px;border-top:1px dotted #d4d4e4"></div>
<div class="a" style="left:1053px;top:243px;font-size:12px;line-height:16px;color:#999;-webkit-text-stroke:0.35px currentColor">画布大小</div>
<div class="a" style="left:1125px;top:242px;font-size:13px;line-height:16px;color:#aaa">1280px * 720px</div>
<div class="a" style="left:1036px;top:283px;width:374px;border-top:1px dotted #e4e4c8"></div>
<div class="a" style="left:1053px;top:309px;font-size:12px;line-height:16px;color:#222;-webkit-text-stroke:0.35px currentColor">逻辑锁</div>
<div class="a" style="left:1125px;top:309px;width:14px;height:14px;border-radius:2px;border:1px solid #666;background:#fff"></div>
<div class="a" style="left:1143px;top:309px;font-size:12px;line-height:16px;color:#333">启用逻辑锁</div>
<div class="a" style="left:1036px;top:337px;width:374px;height:47px;background:#238afd"></div>
<div class="a" style="left:1197px;top:380px;width:58px;height:13px;border-radius:0 0 10px 10px;background:#238afd"></div>
<svg style="left:1220px;top:383px" width="12" height="7"><path d="M1 1 L6 5 L11 1" fill="none" stroke="#fff" stroke-width="1.5"/></svg>
<div class="a" style="left:1039px;width:374px;top:354px;text-align:center;font-size:12px;line-height:16px;color:#fff;-webkit-text-stroke:0.35px currentColor">执行顺序</div>
<svg style="left:1047px;top:352px" width="18" height="18"><g fill="none" stroke="#fff" stroke-width="1.6"><circle cx="9" cy="3" r="2"/><circle cx="3" cy="14" r="2"/><circle cx="15" cy="14" r="2"/><path d="M9 5 V9 M3 12 V9 H15 V12"/></g></svg>
<svg style="left:1082px;top:351px" width="19" height="19"><g fill="none" stroke="#fff" stroke-width="1.6"><path d="M4 13 A7 7 0 0 1 13 3.5 M15 6 A7 7 0 0 1 6 15.5"/><path d="M11 1.5 L13.5 3.5 L11 6 M8 13 L5.5 15.5 L8 17.5"/></g></svg>
<div class="a" style="left:1076px;top:399px;width:304px;height:41px;background:#ebebeb"></div>
<svg style="left:1083px;top:414px" width="14" height="14"><circle cx="7" cy="7" r="5.5" fill="none" stroke="#555" stroke-width="1.2"/><path d="M5.5 4.5 L9.5 7 L5.5 9.5Z" fill="#555"/></svg>
<div class="a" style="left:1102px;top:413px;font-size:12px;line-height:16px;color:#333">出现对话框</div>
<svg style="left:1326px;top:399px" width="54" height="41"><g fill="none" stroke="#e0e0da" stroke-width="1.4"><path d="M3 26 L40 3 L54 30 L20 41"/><path d="M15 22 L36 10 M18 28 L40 16 M22 34 L44 22"/></g></svg>
<div class="a" style="left:1278px;top:413px;font-size:12px;line-height:16px;color:#999">直接出现</div>

</body></html>
